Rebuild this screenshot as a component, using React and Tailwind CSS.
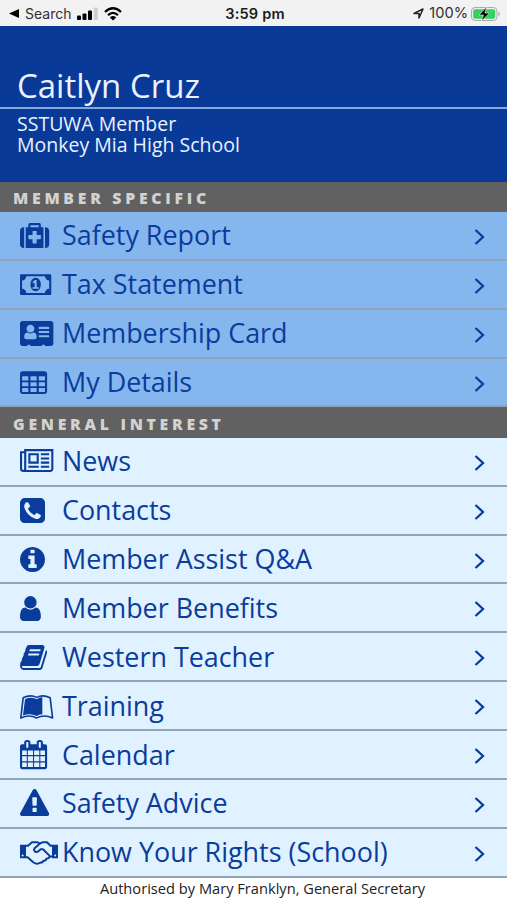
import React from "react";

// Glyphs are drawn on a 1792-unit em, which is 29.2px tall here.
function Glyph({ children, x = 0, w = 1792 }) {
  return (
    <svg
      className="h-[29.2px] shrink-0 overflow-visible fill-current"
      style={{ width: (w * 29.2) / 1792 }}
      viewBox={`${x} 0 ${w} 1792`}
      fillRule="evenodd"
    >
      {children}
    </svg>
  );
}

const Medkit = () => (
  <Glyph>
    <path fillRule="nonzero" d="M1280 1088v-192q0-14-9-23t-23-9h-224v-224q0-14-9-23t-23-9h-192q-14 0-23 9t-9 23v224h-224q-14 0-23 9t-9 23v192q0 14 9 23t23 9h224v224q0 14 9 23t23 9h192q14 0 23-9t9-23v-224h224q14 0 23-9t9-23zm-640-704h512v-128h-512v128zm-384 0v1280h-32q-92 0-158-66t-66-158v-832q0-92 66-158t158-66h32zm1184 0v1280h-1088v-1280h160v-160q0-40 28-68t68-28h576q40 0 68 28t28 68v160h160zm352 224v832q0 92-66 158t-158 66h-32v-1280h32q92 0 158 66t66 158z" />
  </Glyph>
);

const Money = () => (
  <Glyph w={1920}>
    <path d="M64 256h1792q64 0 64 64v1152q0 64-64 64h-1792q-64 0-64-64v-1152q0-64 64-64zM384 384q0 106-75 181t-181 75v512q106 0 181 75t75 181h1152q0-106 75-181t181-75v-512q-106 0-181-75t-75-181z" />
    <path d="M960 480q150 0 235 125t85 291-85 291-235 125-235-125-85-291 85-291 235-125zM768 1152h384v-96h-128v-448h-114l-148 137 77 80q42-37 55-57h2v288h-128z" />
  </Glyph>
);

const AddressCard = () => (
  <Glyph w={2048}>
    <path d="M160 128h1728q66 0 113 47t47 113v1216q0 66-47 113t-113 47h-352v-48q0-32-32-32h-128q-32 0-32 32v48h-704v-48q0-32-32-32h-128q-32 0-32 32v48h-288q-66 0-113-47t-47-113v-1216q0-66 47-113t113-47zM640 352q-100 0-171 71t-71 171 71 171 171 71 171-71 71-171-71-171-171-71zM474 825q-218 0-218 280 0 145 120 145h528q120 0 120-145 0-280-218-280-72 65-166 65t-166-65zM1184 480q-32 0-32 32v64q0 32 32 32h576q32 0 32-32v-64q0-32-32-32zM1184 736q-32 0-32 32v64q0 32 32 32h576q32 0 32-32v-64q0-32-32-32zM1184 992q-32 0-32 32v64q0 32 32 32h576q32 0 32-32v-64q0-32-32-32z" />
  </Glyph>
);

const Table = () => (
  <Glyph w={1664}>
    <path d="M160 192h1344q66 0 113 47t47 113v1088q0 66-47 113t-113 47h-1344q-66 0-113-47t-47-113v-1088q0-66 47-113t113-47zM160 512h320q32 0 32 32v192q0 32-32 32h-320q-32 0-32-32v-192q0-32 32-32zM672 512h320q32 0 32 32v192q0 32-32 32h-320q-32 0-32-32v-192q0-32 32-32zM1184 512h320q32 0 32 32v192q0 32-32 32h-320q-32 0-32-32v-192q0-32 32-32zM160 880h320q32 0 32 32v176q0 32-32 32h-320q-32 0-32-32v-176q0-32 32-32zM672 880h320q32 0 32 32v176q0 32-32 32h-320q-32 0-32-32v-176q0-32 32-32zM1184 880h320q32 0 32 32v176q0 32-32 32h-320q-32 0-32-32v-176q0-32 32-32zM160 1232h320q32 0 32 32v176q0 32-32 32h-320q-32 0-32-32v-176q0-32 32-32zM672 1232h320q32 0 32 32v176q0 32-32 32h-320q-32 0-32-32v-176q0-32 32-32zM1184 1232h320q32 0 32 32v176q0 32-32 32h-320q-32 0-32-32v-176q0-32 32-32z" />
  </Glyph>
);

const Newspaper = () => (
  <Glyph w={2048}>
    <path fillRule="nonzero" d="M1024 512h-384v384h384v-384zm128 640v128h-640v-128h640zm0-768v640h-640v-640h640zm640 768v128h-512v-128h512zm0-256v128h-512v-128h512zm0-256v128h-512v-128h512zm0-256v128h-512v-128h512zm-1536 960v-960h-128v960q0 26 19 45t45 19 45-19 19-45zm1664 0v-1088h-1536v1088q0 33-11 64h1483q26 0 45-19t19-45zm128-1216v1216q0 80-56 136t-136 56h-1664q-80 0-136-56t-56-136v-1088h256v-128h1792z" />
  </Glyph>
);

const Phone = () => (
  <Glyph x={128} w={1536}>
    <path d="M1408 1193q0-11-2-16t-18-16.5-40.5-25-47.5-26.5-45.5-25-28.5-15q-5-3-19-13t-25-15-21-5q-15 0-36.5 20.5t-39.5 45-38.5 45-33.5 20.5q-7 0-16.5-3.5t-15.5-6.5-17-9.5-14-8.5q-99-55-170-126.5t-127-170.5q-2-3-8.5-14t-9.5-17-6.5-15.5-3.5-16.5q0-13 20.5-33.5t45-38.5 45-39.5 20.5-36.5q0-10-5-21t-15-25-13-19q-3-6-15-28.5t-25-45.5-26.5-47.5-25-40.5-16.5-18-16-2q-48 0-101 22-46 21-80 94.5t-34 130.5q0 16 2.5 34t5 30.5 9 33 10 29.5 12.5 33 11 30q60 164 216.5 320.5t320.5 216.5q6 2 30 11t33 12.5 29.5 10 33 9 30.5 5 34 2.5q57 0 130.5-34t94.5-80q22-53 22-101zm256-777v960q0 119-84.5 203.5t-203.5 84.5h-960q-119 0-203.5-84.5t-84.5-203.5v-960q0-119 84.5-203.5t203.5-84.5h960q119 0 203.5 84.5t84.5 203.5z" />
  </Glyph>
);

const Info = () => (
  <Glyph x={128} w={1536}>
    <path d="M1152 1376v-160q0-14-9-23t-23-9h-96v-512q0-14-9-23t-23-9h-320q-14 0-23 9t-9 23v160q0 14 9 23t23 9h96v320h-96q-14 0-23 9t-9 23v160q0 14 9 23t23 9h448q14 0 23-9t9-23zm-128-896v-160q0-14-9-23t-23-9h-192q-14 0-23 9t-9 23v160q0 14 9 23t23 9h192q14 0 23-9t9-23zm640 416q0 209-103 385.5t-279.5 279.5-385.5 103-385.5-103-279.5-279.5-103-385.5 103-385.5 279.5-279.5 385.5-103 385.5 103 279.5 279.5 103 385.5z" />
  </Glyph>
);

const User = () => (
  <Glyph x={256} w={1280}>
    <path fillRule="nonzero" d="M1536 1399q0 109-62.5 187t-150.5 78h-854q-88 0-150.5-78t-62.5-187q0-85 8.5-160.5t31.5-152 58.5-131 94-89 134.5-34.5q131 128 313 128t313-128q76 0 134.5 34.5t94 89 58.5 131 31.5 152 8.5 160.5zm-256-887q0 159-112.5 271.5t-271.5 112.5-271.5-112.5-112.5-271.5 112.5-271.5 271.5-112.5 271.5 112.5 112.5 271.5z" />
  </Glyph>
);

const Book = () => (
  <Glyph x={64} w={1664}>
    <path d="M1703 478q40 57 18 129l-275 906q-19 64-76.5 107.5t-122.5 43.5h-923q-77 0-148.5-53.5t-99.5-131.5q-24-67-2-127 0-4 3-27t4-37q1-8-3-21.5t-3-19.5q2-11 8-21t16.5-23.5 16.5-23.5q23-38 45-91.5t30-91.5q3-10 .5-30t-.5-28q3-11 17-28t17-23q21-36 42-92t25-90q1-9-2.5-32t.5-28q4-13 22-30.5t22-22.5q19-26 42.5-84.5t27.5-96.5q1-8-3-25.5t-2-26.5q2-8 9-18t18-23 17-21q8-12 16.5-30.5t15-35 16-36 19.5-32 26.5-23.5 36-11.5 47.5 5.5l-1 3q38-9 51-9h761q74 0 114 56t18 130l-274 906q-36 119-71.5 153.5t-128.5 34.5h-869q-27 0-38 15-11 16-1 43 24 70 144 70h923q29 0 56-15.5t35-41.5l300-987q7-22 5-57 38 15 59 43zm-1064 2q-4 13 2 22.5t20 9.5h608q13 0 25.5-9.5t16.5-22.5l21-64q4-13-2-22.5t-20-9.5h-608q-13 0-25.5 9.5t-16.5 22.5zm-83 256q-4 13 2 22.5t20 9.5h608q13 0 25.5-9.5t16.5-22.5l21-64q4-13-2-22.5t-20-9.5h-608q-13 0-25.5 9.5t-16.5 22.5z" />
  </Glyph>
);

const OpenBook = () => (
  <Glyph w={2048}>
    <path
      d="M195 350Q640 130 1024 330Q1400 130 1850 350L2000 1590Q1480 1360 1024 1590Q560 1360 50 1590Z"
      fill="none"
      stroke="currentColor"
      strokeWidth="100"
      strokeLinejoin="round"
    />
    <path d="M310 440Q650 290 960 420L1024 450Q1190 330 1370 310V1370Q1180 1380 1024 1470Q610 1270 180 1450Z" />
  </Glyph>
);

const Calendar = () => (
  <Glyph w={1664}>
    <path d="M128 256h128v-96q0-66 47-113t113-47h64q66 0 113 47t47 113v96h384v-96q0-66 47-113t113-47h64q66 0 113 47t47 113v96h128q52 0 90 38t38 90v1280q0 52-38 90t-90 38h-1408q-52 0-90-38t-38-90v-1280q0-52 38-90t90-38zM416 128q-32 0-32 32v288q0 32 32 32h64q32 0 32-32v-288q0-32-32-32zM1184 128q-32 0-32 32v288q0 32 32 32h64q32 0 32-32v-288q0-32-32-32zM128 640h288v288h-288zM480 640h320v288h-320zM864 640h320v288h-320zM1248 640h288v288h-288zM128 992h288v320h-288zM480 992h320v320h-320zM864 992h320v320h-320zM1248 992h288v320h-288zM128 1376h288v288h-288zM480 1376h320v288h-320zM864 1376h320v288h-320zM1248 1376h288v288h-288z" />
  </Glyph>
);

const Warning = () => (
  <Glyph>
    <path d="M1024 1375v-190q0-14-9.5-23.5t-22.5-9.5h-192q-13 0-22.5 9.5t-9.5 23.5v190q0 14 9.5 23.5t22.5 9.5h192q13 0 22.5-9.5t9.5-23.5zm-2-374l18-459q0-12-10-19-13-11-24-11h-220q-11 0-24 11-10 7-10 21l17 457q0 10 10 16.5t24 6.5h185q14 0 23.5-6.5t10.5-16.5zm-14-934l768 1408q35 63-2 126-17 29-46.5 46t-63.5 17h-1536q-34 0-63.5-17t-46.5-46q-37-63-2-126l768-1408q17-31 47-49t65-18 65 18 47 49z" />
  </Glyph>
);

const Handshake = () => (
  <svg className="mt-[1px] h-6 w-[38px] shrink-0" viewBox="0 0 38 24">
    <g fill="currentColor" fillRule="evenodd">
      <path d="M0 3.8H6V17.2H0ZM1.6 14.4a1 1 0 1 0 2 0a1 1 0 1 0-2 0Z" />
      <path d="M32 3.8H38V17.2H32ZM34.2 14.4a1 1 0 1 0 2 0a1 1 0 1 0-2 0Z" />
    </g>
    <g fill="none" stroke="currentColor" strokeWidth="2" strokeLinejoin="round" strokeLinecap="round">
      <path d="M6 4.8H8L12 1.3H17.5L20 2.4L22.5 1.3H27L30.5 4.8H32" />
      <path d="M20 2.4L14.6 7.2Q13.4 8.8 14.8 10.4Q16.6 11.8 18.4 10.2L20.6 8.2H23L29.2 14.4" />
      <path d="M6 16.2H7.6L13.2 21.2Q17 24 20.2 21.8Q22.6 21.8 23.6 19.8Q26 20 26.6 17.6Q29.6 17.4 29.4 15.6H32" />
    </g>
  </svg>
);

function Row({ icon: Icon, label }) {
  return (
    <li className="flex h-[48.88px] items-center border-b-2 border-[#8fa6b8] pl-[20.3px] pr-[22px] pt-[1.2px]">
      <span className="flex w-[41.7px] shrink-0 items-center">
        <Icon />
      </span>
      <span className="grow whitespace-nowrap text-[26.9px] leading-none">{label}</span>
      <svg className="mt-[2px] h-4 w-[11px] fill-none stroke-current stroke-[2.3]" viewBox="0 0 11 16">
        <path d="M1.5 1l7.5 7-7.5 7" />
      </svg>
    </li>
  );
}

function Heading({ children }) {
  return (
    <h2 className="flex h-[30.4px] items-center bg-[#616161] pl-[13px] pt-[5px] text-[15.8px] font-extrabold leading-none tracking-[3.72px] text-[#d2d2d2]">
      {children}
    </h2>
  );
}

const specific = [
  [Medkit, "Safety Report"],
  [Money, "Tax Statement"],
  [AddressCard, "Membership Card"],
  [Table, "My Details"],
];

const general = [
  [Newspaper, "News"],
  [Phone, "Contacts"],
  [Info, "Member Assist Q&A"],
  [User, "Member Benefits"],
  [Book, "Western Teacher"],
  [OpenBook, "Training"],
  [Calendar, "Calendar"],
  [Warning, "Safety Advice"],
  [Handshake, "Know Your Rights (School)"],
];

function StatusBar() {
  return (
    <div className="grid h-[25.5px] grid-cols-3 items-center bg-[#f2f2f2] pl-[9px] pr-[6px] pt-[2px] font-[Inter,sans-serif] text-[14px] leading-none text-[#303030]">
      <div className="flex items-center">
        <svg className="h-[9px] w-[10px] fill-black" viewBox="0 0 10 9">
          <path d="M0 4.5L10 0v9z" />
        </svg>
        <span className="ml-[6px]">Search</span>
        <svg className="ml-[6px] h-[14px] w-[21px]" viewBox="0 0 21 14">
          <rect x="0" y="8.5" width="4" height="4.5" rx="1" />
          <rect x="5.5" y="6.5" width="4" height="6.5" rx="1" />
          <rect x="11" y="3.5" width="4" height="9.5" rx="1" />
          <rect x="16.8" y="0.5" width="4" height="12.5" rx="1" fill="#cfcfcf" />
        </svg>
        <svg className="ml-[6px] h-[14px] w-[18px] fill-none stroke-black" viewBox="0 0 18 14">
          <path d="M1 5Q9-2.5 17 5M4 8.2Q9 3.6 14 8.2" strokeWidth="2.3" />
          <path d="M9 13.5L5.8 10.4Q9 7.8 12.2 10.4Z" fill="black" stroke="none" />
        </svg>
      </div>
      <div className="mt-[1px] text-center text-[14.6px] font-semibold tracking-[0.15px] text-[#1c1c1c]">3:59 pm</div>
      <div className="flex items-center justify-end">
        <svg className="h-[11px] w-[11px] fill-none stroke-[#222] stroke-[1.5]" viewBox="0 0 11 11">
          <path d="M1 5.4L10 1L6 10V5.4Z" strokeLinejoin="round" />
        </svg>
        <span className="ml-[5px] text-[14.6px]">100%</span>
        <svg className="ml-[3px] h-[14px] w-[30px]" viewBox="0 0 30 14">
          <rect x="0.5" y="0.5" width="25.5" height="13" rx="3.5" fill="#eee" stroke="#aaa" />
          <rect x="2.2" y="2.2" width="22" height="9.6" rx="2" fill="#35d05f" />
          <path d="M27.5 4.5q3 2.5 0 5z" fill="#aaa" />
          <path d="M15.5 0L8 8h4.5L10.5 14L18.5 6h-4.5z" fill="black" stroke="#f2f2f2" strokeWidth=".6" />
        </svg>
      </div>
    </div>
  );
}

export default function App() {
  return (
    <div className="h-[900px] w-[507px] overflow-hidden bg-white font-['Open_Sans','Noto_Sans',sans-serif]">
      <StatusBar />
      <header className="h-[156px] bg-[#093a98] text-[#eaf2ff]">
        <h1 className="flex h-[83px] items-end border-b-2 border-[#86a7dc] pb-[4px] pl-[17px] text-[33px] leading-[34px]">
          Caitlyn Cruz
        </h1>
        <div className="flex flex-col pl-[17px] pt-[4px] text-[19.5px] leading-[21px]">
          <span>SSTUWA Member</span>
          <span>Monkey Mia High School</span>
        </div>
      </header>
      <Heading>MEMBER SPECIFIC</Heading>
      <ul className="bg-[#85b7ee] text-[#0a3c9c]">
        {specific.map(([icon, label]) => (
          <Row key={label} icon={icon} label={label} />
        ))}
      </ul>
      <Heading>GENERAL INTEREST</Heading>
      <ul className="bg-[#e0f2ff] text-[#0a3c9c]">
        {general.map(([icon, label]) => (
          <Row key={label} icon={icon} label={label} />
        ))}
      </ul>
      <footer className="pl-[18px] pt-[1px] text-center text-[14.65px] leading-[18px] text-[#222]">
        Authorised by Mary Franklyn, General Secretary
      </footer>
    </div>
  );
}
